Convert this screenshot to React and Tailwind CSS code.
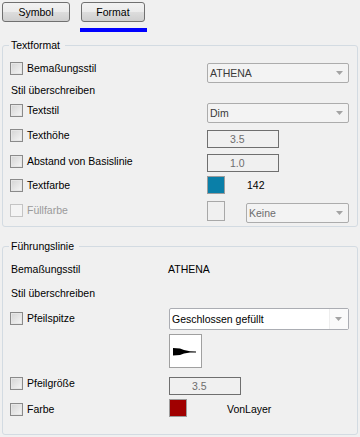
import React from 'react';

function Arrow() {
  return (
    <svg width="8" height="5" viewBox="0 0 8 5" className="shrink-0">
      <polygon points="0,0 7,0 3.5,4" fill="#a3a3a3" />
    </svg>
  );
}

function Combo({ value, className = '', textClass = 'text-[#3a3a3a]' }) {
  return (
    <div
      className={`flex h-[20px] items-center justify-between rounded-[2px] border border-[#acacac] bg-[#f3f3f3] pl-[2px] pr-[4px] ${className}`}
    >
      <span className={textClass}>{value}</span>
      <Arrow />
    </div>
  );
}

function Check({ label, disabled }) {
  return (
    <div className="flex h-[13px] items-center gap-[4px]">
      <span
        className={`block h-[13px] w-[13px] shrink-0 border ${
          disabled
            ? 'border-[#c4c4c4] bg-[#f4f4f4]'
            : 'border-[#8a8a8a] bg-[linear-gradient(135deg,#d4d4d4,#f6f6f6)] shadow-[inset_0_0_0_1px_#e6e6e6]'
        }`}
      />
      <span className={disabled ? 'text-[#9a9a9a]' : 'text-black'}>{label}</span>
    </div>
  );
}

function ValueBox({ value }) {
  return (
    <div className="flex h-[18px] w-[72px] items-center border border-[#6f6f6f] bg-[#f0f0f0] pl-[22px] text-[#6d6d6d]">
      {value}
    </div>
  );
}

function Group({ title, titleWidth, className = '', children }) {
  return (
    <div className={`relative mx-[2px] rounded-[3px] border border-[#d3dbe2] ${className}`}>
      <span
        className={`absolute left-[6px] top-[-7px] bg-[#f0f0f0] pl-[2px] leading-[13px] text-black ${titleWidth}`}
      >
        {title}
      </span>
      {children}
    </div>
  );
}

function TabButton({ children, className = '' }) {
  return (
    <button
      type="button"
      className={`h-[20px] rounded-[3px] border border-[#707070] bg-[linear-gradient(#f2f2f2,#ebebeb_50%,#dddddd_50%,#cfcfcf)] text-black ${className}`}
    >
      {children}
    </button>
  );
}

export default function App() {
  return (
    <div className="h-[437px] w-[360px] overflow-hidden bg-[#f0f0f0] font-['Liberation_Sans',Arial,sans-serif] text-[10.5px] leading-[13px]">
      <div className="flex pl-[2px] pt-[2px]">
        <TabButton className="w-[68px]">Symbol</TabButton>
        <div className="ml-[10px] flex w-[67px] flex-col">
          <TabButton className="ml-[1px] w-[64px]">Format</TabButton>
          <div className="mt-[6px] h-[4px] bg-[#0000ff]" />
        </div>
      </div>

      <Group title="Textformat" titleWidth="w-[56px]" className="mt-[13px] h-[182px] pl-[7px]">
        <div className="mt-[16px] flex items-start">
          <div className="w-[197px]">
            <Check label="Bemaßungsstil" />
          </div>
          <Combo value="ATHENA" className="mt-[1px] w-[142px]" />
        </div>
        <div className="mt-[1px] h-[13px] pl-[1px]">Stil überschreiben</div>
        <div className="mt-[6px] flex items-start">
          <div className="mt-[1px] w-[197px]">
            <Check label="Textstil" />
          </div>
          <Combo value="Dim" className="w-[142px]" />
        </div>
        <div className="mt-[6px] flex items-start">
          <div className="w-[197px]">
            <Check label="Texthöhe" />
          </div>
          <div className="mt-[1px]">
            <ValueBox value="3.5" />
          </div>
        </div>
        <div className="mt-[6px] flex items-start">
          <div className="mt-[1px] w-[197px]">
            <Check label="Abstand von Basislinie" />
          </div>
          <ValueBox value="1.0" />
        </div>
        <div className="mt-[4px] flex items-start">
          <div className="mt-[3px] w-[197px]">
            <Check label="Textfarbe" />
          </div>
          <span className="h-[18px] w-[18px] border border-[#9c9c9c] bg-[#0a7fa8]" />
          <span className="ml-[22px] mt-[3px] text-black">142</span>
        </div>
        <div className="mt-[7px] flex items-start">
          <div className="mt-[3px] w-[197px]">
            <Check label="Füllfarbe" disabled />
          </div>
          <span className="h-[20px] w-[18px] border border-[#a8a8a8] bg-[#f0f0f0]" />
          <Combo value="Keine" className="ml-[21px] mt-[2px] w-[103px]" textClass="text-[#6d6d6d]" />
        </div>
      </Group>

      <Group title="Führungslinie" titleWidth="w-[70px]" className="mt-[19px] h-[189px] pl-[7px]">
        <div className="mt-[16px] flex h-[13px] items-center pl-[1px]">
          <span className="w-[157px]">Bemaßungsstil</span>
          <span>ATHENA</span>
        </div>
        <div className="mt-[11px] h-[13px] pl-[1px]">Stil überschreiben</div>
        <div className="mt-[8px] flex items-start">
          <div className="mt-[4px] w-[159px]">
            <Check label="Pfeilspitze" />
          </div>
          <div className="flex h-[22px] w-[180px] items-stretch rounded-[2px] border border-[#abadb3] bg-white">
            <span className="flex flex-1 items-center pl-[2px] text-black">Geschlossen gefüllt</span>
            <span className="flex w-[19px] items-center justify-center border-l border-[#eeeeee] bg-[#fafafa]">
              <Arrow />
            </span>
          </div>
        </div>
        <div className="mt-[4px] ml-[159px] h-[34px] w-[33px] border border-[#a0a0a0] bg-white">
          <svg width="31" height="32" viewBox="0 0 31 32">
            <polygon points="3,13 10,13.5 14,15 20,16.2 26,16.4 26,17.4 20,17.6 14,18.5 10,20 3,20.5" fill="#000" />
          </svg>
        </div>
        <div className="mt-[9px] flex items-start">
          <div className="w-[159px]">
            <Check label="Pfeilgröße" />
          </div>
          <ValueBox value="3.5" />
        </div>
        <div className="mt-[4px] flex items-start">
          <div className="mt-[4px] w-[159px]">
            <Check label="Farbe" />
          </div>
          <span className="h-[18px] w-[18px] border border-[#9c9c9c] bg-[#a00000]" />
          <span className="ml-[40px] mt-[4px] text-black">VonLayer</span>
        </div>
      </Group>
    </div>
  );
}
